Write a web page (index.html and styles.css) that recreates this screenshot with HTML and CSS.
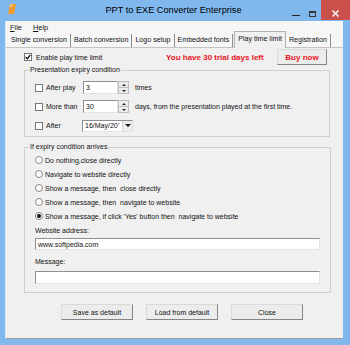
FILE: index.html
```html
<!DOCTYPE html>
<html lang="en">
<head>
  <meta charset="UTF-8" />
  <title>PPT to EXE Converter Enterprise</title>
  <link rel="stylesheet" href="styles.css">
</head>
<body>
<div class="window">
  <div class="titlebar">
    <div class="tb-left">
      <svg class="app-icon" width="8" height="10" viewBox="0 0 8 10">
        <path d="M2 0 H8 L6 10 H0 Z" fill="#f39b2e"/>
        <path d="M2 0 H5 L4.4 3 H1.4 Z" fill="#f7c06f"/>
      </svg>
    </div>
    <div class="title">PPT to EXE Converter Enterprise</div>
    <div class="caption">
      <div class="cap-btn"><span class="cap-min"></span></div>
      <div class="cap-btn"><span class="cap-max"></span></div>
      <div class="cap-btn cap-close">
        <svg width="7" height="7" viewBox="0 0 7 7"><path d="M0.5 0.5 L6.5 6.5 M6.5 0.5 L0.5 6.5" stroke="#fff" stroke-width="1.4"/></svg>
      </div>
    </div>
  </div>

  <div class="client">
    <div class="menubar">
      <span class="menu-item"><u>F</u>ile</span>
      <span class="menu-item"><u>H</u>elp</span>
    </div>

    <div class="tabs">
      <span class="tab">Single conversion</span>
      <span class="tab">Batch conversion</span>
      <span class="tab">Logo setup</span>
      <span class="tab">Embedded fonts</span>
      <span class="tab active">Play time limit</span>
      <span class="tab">Registration</span>
    </div>

    <div class="tabpanel">
      <div class="toprow">
        <label class="enable">
          <span class="check checked">
            <svg width="6" height="6" viewBox="0 0 6 6"><path d="M0.6 3 L2.3 4.8 L5.4 0.8" fill="none" stroke="#000" stroke-width="1.2"/></svg>
          </span>
          Enable play time limit
        </label>
        <span class="trial">You have 30 trial days left</span>
        <button class="btn buy">Buy now</button>
      </div>

      <fieldset class="group expiry">
        <legend>Presentation expiry condition</legend>
        <div class="cond-row">
          <span class="check"></span>
          <span class="cond-label">After play</span>
          <span class="field num">3</span>
          <span class="spin"><span class="spin-up"></span><span class="spin-down"></span></span>
          <span class="cond-after">times</span>
        </div>
        <div class="cond-row">
          <span class="check"></span>
          <span class="cond-label">More than</span>
          <span class="field num">30</span>
          <span class="spin"><span class="spin-up"></span><span class="spin-down"></span></span>
          <span class="cond-after">days, from the presentation played at the first time.</span>
        </div>
        <div class="cond-row">
          <span class="check"></span>
          <span class="cond-label">After</span>
          <span class="combo"><span class="combo-text">16/May/20'</span><span class="combo-arrow"></span></span>
        </div>
      </fieldset>

      <fieldset class="group arrives">
        <legend>If expiry condition arrives</legend>
        <div class="radios">
          <label class="radio-row"><span class="radio"></span>Do nothing,close directly</label>
          <label class="radio-row"><span class="radio"></span>Navigate to website directly</label>
          <label class="radio-row"><span class="radio"></span>Show a message, then&nbsp; close directly</label>
          <label class="radio-row"><span class="radio"></span>Show a message, then&nbsp; navigate to website</label>
          <label class="radio-row"><span class="radio on"></span>Show a message, if click 'Yes' button then&nbsp; navigate to website</label>
        </div>
        <div class="field-label">Website address:</div>
        <div class="field wide">www.softpedia.com</div>
        <div class="field-label msg">Message:</div>
        <div class="field wide tall"></div>
      </fieldset>
    </div>

    <div class="actions">
      <button class="btn">Save as default</button>
      <button class="btn">Load from default</button>
      <button class="btn">Close</button>
    </div>
  </div>
</div>
</body>
</html>
```

FILE: styles.css
```css
* {
  margin: 0;
  padding: 0;
  box-sizing: border-box;
}

body {
  background: #80b7ed;
  font-family: "Liberation Sans", Arial, sans-serif;
  font-size: 7px;
  color: #111;
}

.window {
  width: 350px;
  height: 345px;
  display: flex;
  flex-direction: column;
}

/* title bar */
.titlebar {
  height: 21px;
  display: grid;
  grid-template-columns: 1fr auto 1fr;
}

.tb-left {
  padding: 4px 0 0 8px;
}

.title {
  font-size: 9.2px;
  line-height: 20px;
  color: #000;
  padding-right: 3px;
}

.caption {
  display: flex;
  justify-content: flex-end;
}

.cap-btn {
  width: 17px;
  height: 20px;
  display: flex;
  justify-content: center;
  align-items: flex-end;
  padding-bottom: 3px;
}

.cap-min {
  width: 8px;
  height: 1px;
  background: #222;
  margin-bottom: 1px;
}

.cap-max {
  width: 7px;
  height: 6px;
  border: 1px solid #333;
  border-top-width: 2px;
}

.cap-close {
  width: 29px;
  background: #c9504b;
}

/* client area */
.client {
  margin-left: 5px;
  width: 338px;
  height: 318px;
  background: #f0f0f0;
  border-bottom: 1px solid #9c9c9c;
  border-left: 1px solid #dfe9f3;
}

.menubar {
  height: 13px;
  background: #f6f6f6;
  display: flex;
  gap: 11px;
  padding-left: 4px;
  font-size: 7.4px;
  line-height: 13px;
}

.tabs {
  height: 14px;
  display: flex;
  align-items: flex-end;
  padding-left: 3px;
  background: #f6f6f6;
  border-bottom: 1px solid #c4c4c4;
}

.tab {
  height: 13px;
  line-height: 12px;
  font-size: 7.1px;
  padding: 0 3px 0 2px;
  border-right: 1px solid #8a8a8a;
  margin-right: 1px;
}

.tab.active {
  height: 17px;
  margin-bottom: -1px;
  line-height: 14px;
  background: #f0f0f0;
  border: 1px solid #b0b0b0;
  border-bottom: none;
  padding: 0 3px;
}

.tabpanel {
  padding-left: 18px;
}

.toprow {
  height: 18px;
  display: flex;
  align-items: center;
}

.enable {
  width: 142px;
  display: flex;
  align-items: center;
  gap: 4px;
}

.trial {
  width: 111px;
  color: #e8141c;
  font-weight: bold;
  font-size: 8px;
}

.btn {
  font-family: "Liberation Sans", Arial, sans-serif;
  font-size: 7px;
  color: #111;
  background: #ececec;
  border: 1px solid;
  border-color: #dadada #858585 #858585 #dadada;
  height: 16px;
  width: 72px;
}

.buy {
  width: 50px;
  color: #e8141c;
  font-weight: bold;
  font-size: 8px;
}

/* checkboxes and radios */
.check {
  width: 8px;
  height: 8px;
  background: #fff;
  border: 1px solid #777;
  display: flex;
  align-items: center;
  justify-content: center;
  flex-shrink: 0;
}

.radio {
  width: 8px;
  height: 8px;
  border-radius: 50%;
  background: #fff;
  border: 1px solid #888;
  display: flex;
  align-items: center;
  justify-content: center;
  flex-shrink: 0;
}

.radio.on::after {
  content: "";
  width: 4px;
  height: 4px;
  border-radius: 50%;
  background: #111;
}

/* group boxes */
.group {
  width: 306px;
  border: 1px solid #cfcfcf;
  padding: 0 10px 0 10px;
}

.group legend {
  margin-left: -6px;
  padding: 0 1px;
  line-height: 8px;
}

.expiry {
  padding-top: 7px;
  padding-bottom: 4px;
  display: flex;
  flex-direction: column;
  gap: 6px;
}

.cond-row {
  height: 13px;
  display: flex;
  align-items: center;
}

.cond-label {
  width: 37px;
  margin-left: 3px;
}

.field {
  background: #fff;
  border: 1px solid;
  border-color: #8f8f8f #e2e2e2 #e2e2e2 #8f8f8f;
  height: 13px;
  line-height: 11px;
  padding-left: 2px;
}

.num {
  width: 35px;
}

.spin {
  width: 11px;
  height: 13px;
  display: flex;
  flex-direction: column;
  border: 1px solid #bdbdbd;
}

.spin-up,
.spin-down {
  flex: 1;
  background: #ececec;
  display: flex;
  align-items: center;
  justify-content: center;
}

.spin-up {
  border-bottom: 1px solid #bdbdbd;
}

.spin-up::after {
  content: "";
  border: 2px solid transparent;
  border-bottom: 2px solid #222;
  border-top: none;
}

.spin-down::after {
  content: "";
  border: 2px solid transparent;
  border-top: 2px solid #222;
  border-bottom: none;
}

.cond-after {
  margin-left: 6px;
}

.combo {
  width: 51px;
  height: 12px;
  margin-left: -1px;
  display: flex;
  background: #fff;
  border: 1px solid;
  border-color: #8f8f8f #e2e2e2 #e2e2e2 #8f8f8f;
}

.combo-text {
  flex: 1;
  overflow: hidden;
  white-space: nowrap;
  line-height: 10px;
  padding-left: 2px;
}

.combo-arrow {
  width: 10px;
  background: #ececec;
  border-left: 1px solid #d0d0d0;
  display: flex;
  align-items: center;
  justify-content: center;
}

.combo-arrow::after {
  content: "";
  border: 3px solid transparent;
  border-top: 3px solid #111;
  border-bottom: none;
}

.arrives {
  margin-top: 6px;
  padding-top: 4px;
  padding-bottom: 8px;
}

.radios {
  display: flex;
  flex-direction: column;
  gap: 4px;
}

.radio-row {
  height: 10px;
  display: flex;
  align-items: center;
  gap: 2px;
}

.field-label {
  margin-top: 5px;
  height: 9px;
  line-height: 9px;
}

.field-label.msg {
  margin-top: 7px;
}

.wide {
  width: 285px;
  height: 12px;
  margin-top: 3px;
}

.wide.tall {
  height: 13px;
  margin-top: 5px;
}

.actions {
  display: flex;
  gap: 13px;
  padding-left: 55px;
  margin-top: 11px;
}
```
